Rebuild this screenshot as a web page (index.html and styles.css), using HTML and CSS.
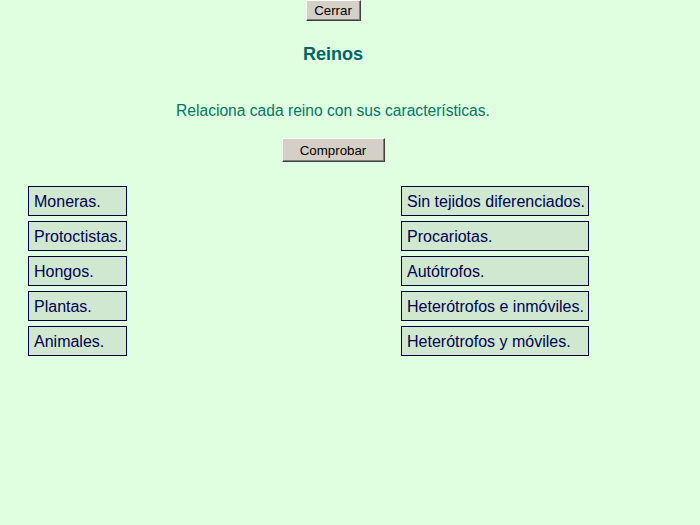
FILE: index.html
```html
<!DOCTYPE html>
<html lang="es">
<head>
<meta charset="utf-8">
<title>Reinos</title>
<link rel="stylesheet" href="styles.css">
</head>
<body>
<div class="page">
  <div class="top"><button class="btn btn-close">Cerrar</button></div>
  <h1 class="title">Reinos</h1>
  <p class="instr">Relaciona cada reino con sus características.</p>
  <div class="check"><button class="btn btn-check">Comprobar</button></div>
  <div class="cols">
    <div class="col col-left">
      <div class="item">Moneras.</div>
      <div class="item">Protoctistas.</div>
      <div class="item">Hongos.</div>
      <div class="item">Plantas.</div>
      <div class="item">Animales.</div>
    </div>
    <div class="col col-right">
      <div class="item">Sin tejidos diferenciados.</div>
      <div class="item">Procariotas.</div>
      <div class="item">Autótrofos.</div>
      <div class="item">Heterótrofos e inmóviles.</div>
      <div class="item">Heterótrofos y móviles.</div>
    </div>
  </div>
</div>
</body>
</html>
```

FILE: styles.css
```css
html, body {
  margin: 0;
  padding: 0;
  background: #e0ffe0;
  font-family: "Liberation Sans", Arial, sans-serif;
}
.page {
  width: 666px;
  height: 525px;
}
.top {
  display: flex;
  justify-content: center;
}
.btn {
  font-family: "Liberation Sans", Arial, sans-serif;
  font-size: 13.3px;
  color: #000;
  background: #d4d0c8;
  border: 1px solid;
  border-color: #ffffff #404040 #404040 #ffffff;
  box-shadow: inset -1px -1px 0 #808080;
  padding: 0;
  margin: 0;
}
.btn-close {
  width: 55px;
  height: 21px;
}
.btn-check {
  width: 103px;
  height: 24px;
}
.title {
  margin: 0;
  padding-top: 22px;
  height: 22px;
  line-height: 22px;
  text-align: center;
  font-size: 18px;
  font-weight: bold;
  color: #006666;
}
.instr {
  margin: 0;
  padding-top: 37px;
  height: 18px;
  line-height: 18px;
  text-align: center;
  font-size: 15.6px;
  color: #007766;
}
.check {
  display: flex;
  justify-content: center;
  padding-top: 18px;
}
.cols {
  display: flex;
  padding-left: 28px;
  padding-top: 24px;
  gap: 274px;
}
.col {
  display: flex;
  flex-direction: column;
  gap: 5px;
}
.col-left .item { width: 92px; }
.col-right .item { width: 181px; }
.item {
  height: 27px;
  padding-top: 1px;
  line-height: 28px;
  border: 1px solid #000040;
  background: #d0e8d0;
  color: #000050;
  font-size: 16px;
  padding-left: 5px;
  white-space: nowrap;
  overflow: hidden;
}
```
